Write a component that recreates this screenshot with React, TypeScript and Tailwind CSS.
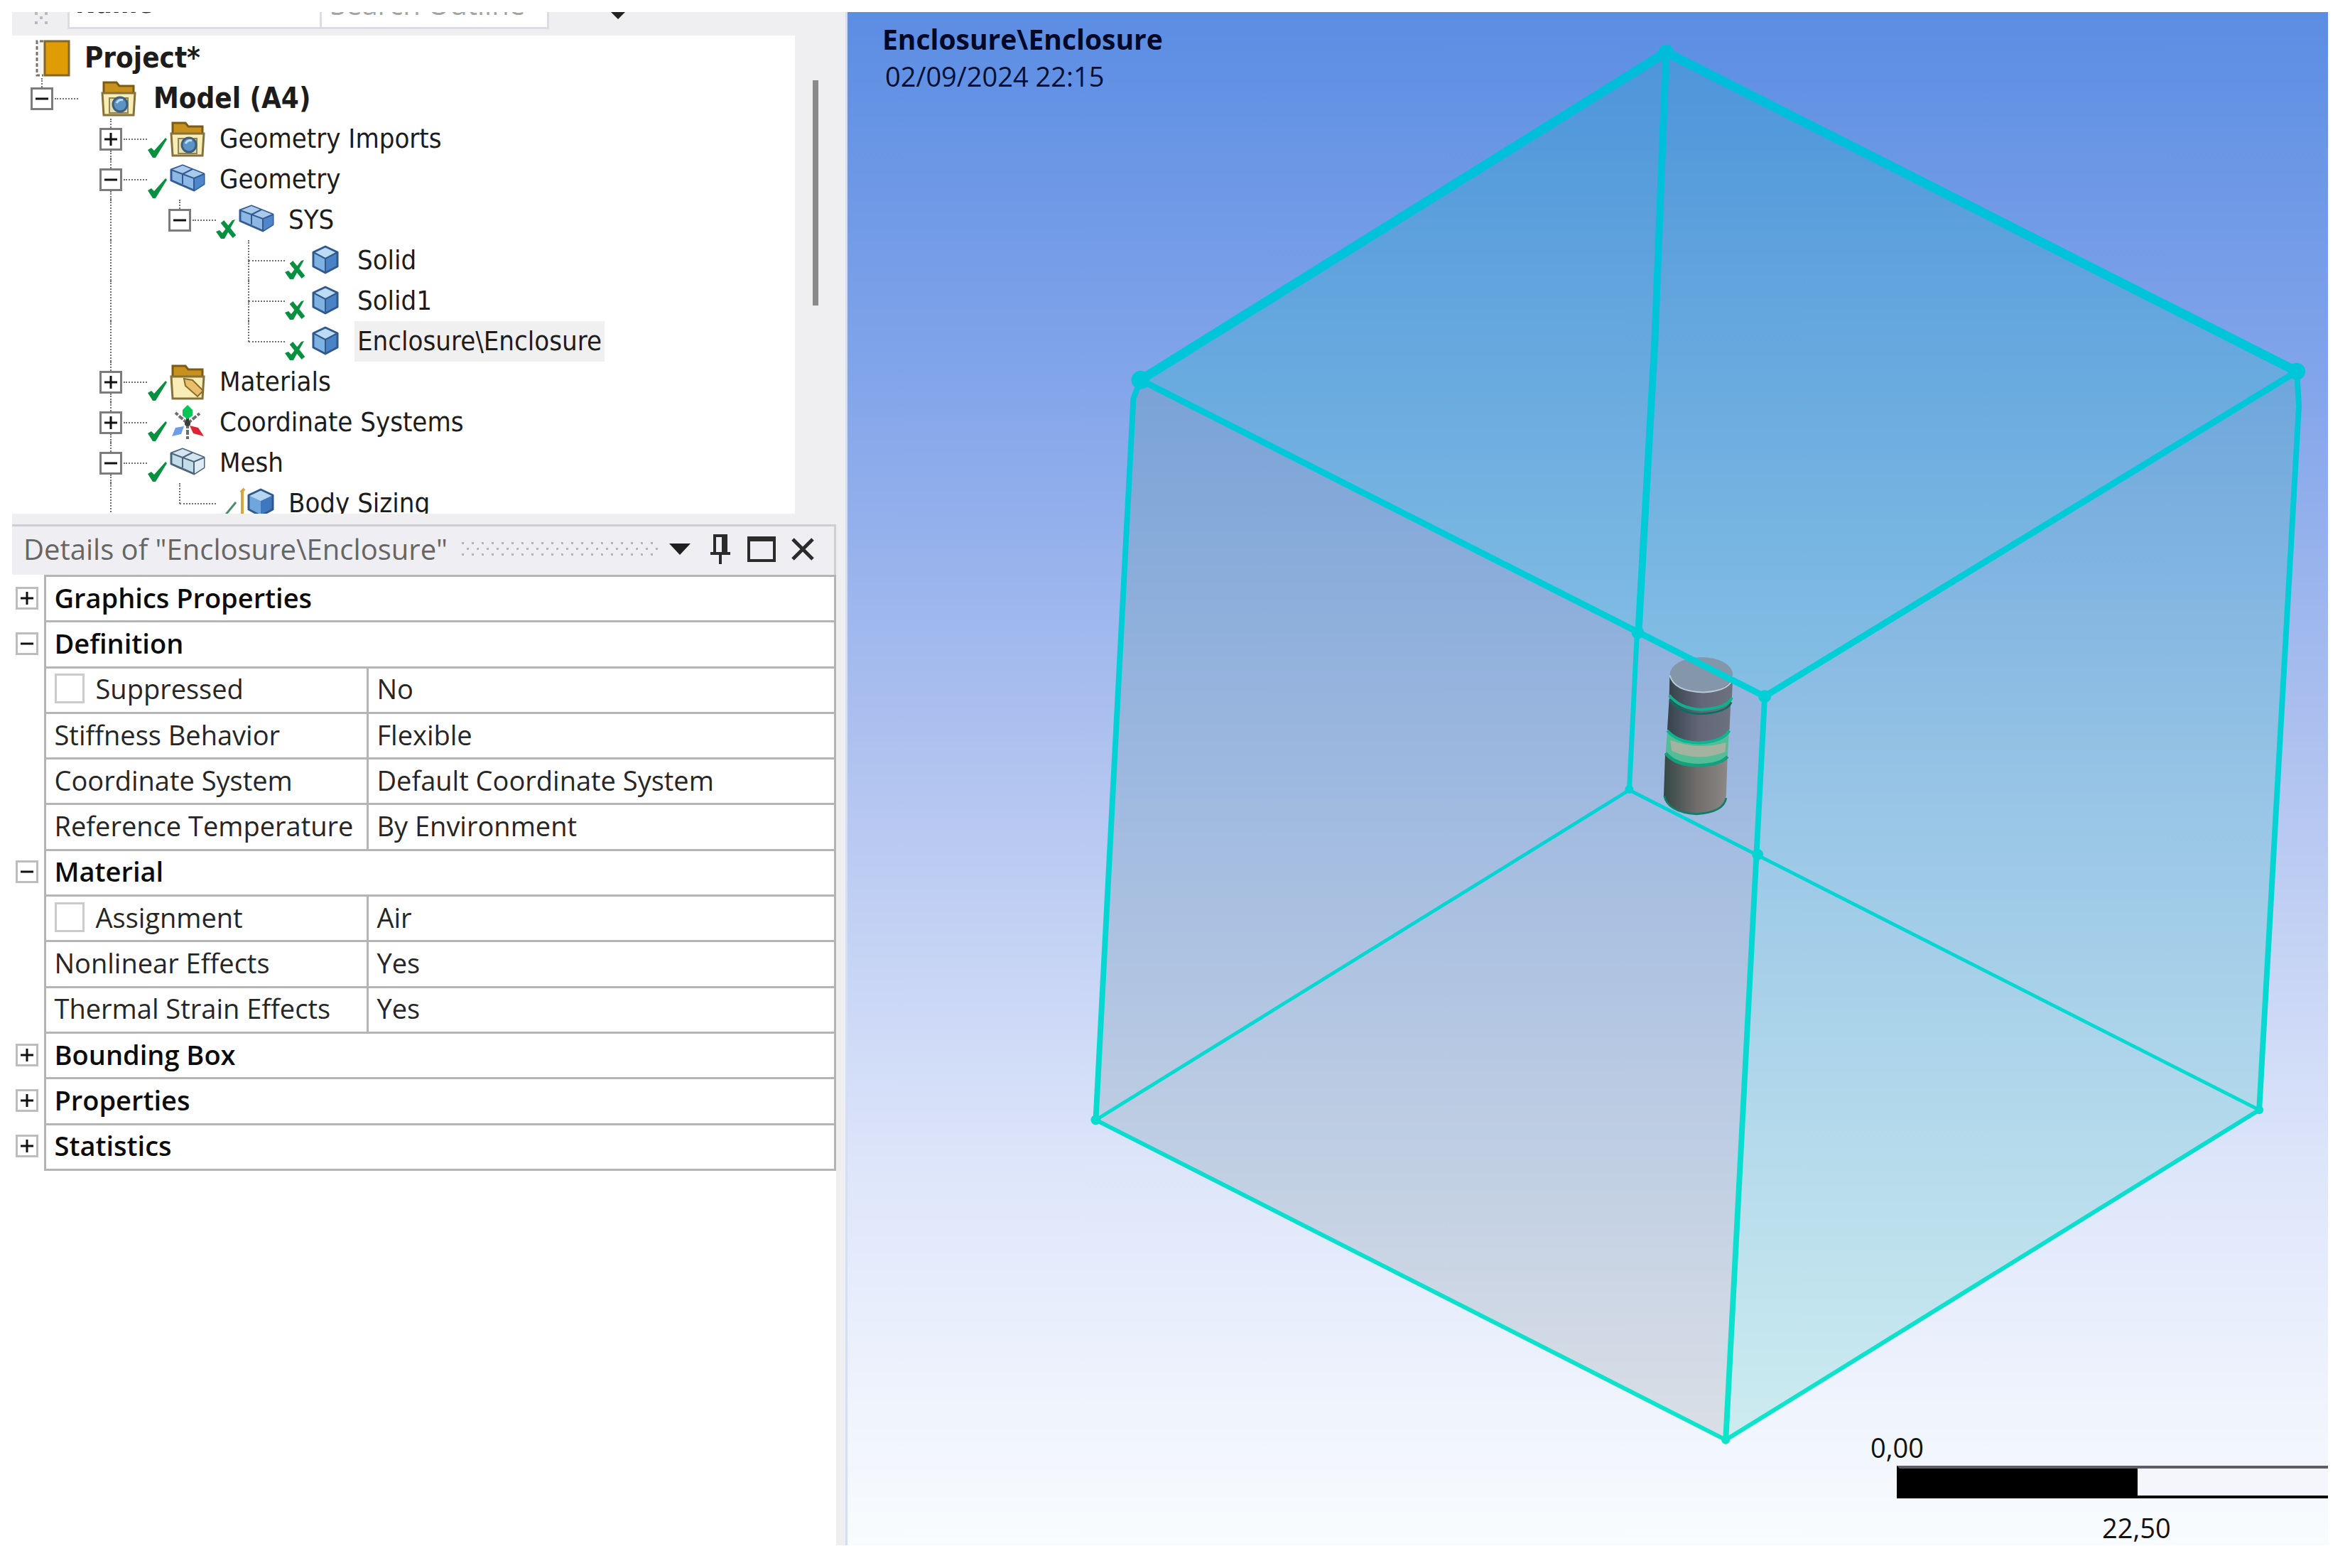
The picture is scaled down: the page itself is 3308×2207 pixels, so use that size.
import type { ReactNode } from 'react'

type TreeRow = {
  label: string
  icon: ReactNode
  guides: boolean[]
  box?: 'plus' | 'minus'
  mark?: 'check' | 'hidden' | 'thin'
  last?: boolean
  bold?: boolean
  selected?: boolean
}

type DetailRow = {
  name: string
  value?: string
  box?: 'plus' | 'minus'
  checkbox?: boolean
}

function FolderIcon({ content }: { content: 'ball' | 'tag' }) {
  return (
    <svg viewBox="0 0 50 50" className="size-[50px]">
      <path d="M4 20V2h18l4 5h20v13z" fill="#c8901c" stroke="#7d5a12" strokeWidth="3" />
      <path d="M2 17h46l-2 31H4z" fill="#f8edb4" stroke="#85713a" strokeWidth="3" />
      {content === 'ball' ? (
        <>
          <path d="M12 24h26v21H12z" fill="#e8dfae" stroke="#8f8458" strokeWidth="2" />
          <circle cx="27" cy="33" r="10" fill="#5b93c4" stroke="#3f5f7d" strokeWidth="3" />
          <path d="M22 31q4-6 9-4" fill="none" stroke="#b9dcf2" strokeWidth="3" />
        </>
      ) : (
        <path d="M20 20l12 2 15 15-8 8-17-15z" fill="#e9bf6c" stroke="#8b6a2a" strokeWidth="2" />
      )}
    </svg>
  )
}

function BodyIcon() {
  return (
    <svg viewBox="0 0 50 50" className="size-[50px]">
      <path d="M25 5l17 8-17 9-17-9z" fill="#bcdcf5" />
      <path d="M8 13l17 9v19L8 33z" fill="#7fb2e2" />
      <path d="M42 13l-17 9v19l17-8z" fill="#4a82c6" />
      <path d="M25 5l17 8v20l-17 9-17-9V13z" fill="none" stroke="#31588a" strokeWidth="3" strokeLinejoin="round" />
      <path d="M8 13l17 9 17-9M25 22v19" fill="none" stroke="#31588a" strokeWidth="2" />
    </svg>
  )
}

function BodiesIcon({ pale }: { pale?: boolean }) {
  const side = pale ? '#c3dcec' : '#8db8e6'
  const front = pale ? '#dcebf5' : '#4d86ca'
  const line = pale ? '#4c6578' : '#345b91'
  return (
    <svg viewBox="0 0 50 50" className="size-[50px]">
      <path d="M2 11l16-6 30 12v14l-14 9L2 26z" fill={side} stroke={line} strokeWidth="3" strokeLinejoin="round" />
      <path d="M18 5l30 12-13 6L3 11z" fill={pale ? '#d3e5f0' : '#a9caec'} />
      <path d="M35 23l13-6v14l-14 9z" fill={front} />
      <path d="M2 11l32 12 14-6M34 23v17M18 17v14M18 17l14-7" fill="none" stroke={line} strokeWidth="2" />
    </svg>
  )
}

function AxesIcon() {
  return (
    <svg viewBox="0 0 50 50" className="size-[50px]">
      <path d="M25 26L8 11M25 26l17-14M25 26v22" stroke="#6d6d6d" strokeWidth="4" strokeDasharray="7 2" />
      <path d="M25 26v-8" stroke="#333" strokeWidth="4" />
      <circle cx="25" cy="26" r="4" fill="#3c3c3c" />
      <path d="M25 0l7 7v8l-7 5-7-5V7z" fill="#06c755" />
      <path d="M28 29l12 3 8 12-15-4z" fill="#dd2437" />
      <path d="M20 30L8 32 3 44l13-3z" fill="#6b9ee6" />
    </svg>
  )
}

function SizingIcon() {
  return (
    <svg viewBox="0 0 50 50" className="size-[50px]">
      <path d="M8 4L3 9M5 7v34l7 2" fill="none" stroke="#d8a63a" strokeWidth="4" />
      <path d="M31 5l17 8-17 8-17-8z" fill="#b5d6f2" />
      <path d="M14 13l17 8v20l-17-8z" fill="#6fa6dd" />
      <path d="M48 13l-17 8v20l17-8z" fill="#3f78bf" />
      <path d="M31 5l17 8v20l-17 9-17-9V13z" fill="none" stroke="#31588a" strokeWidth="3" strokeLinejoin="round" />
    </svg>
  )
}

function ProjectIcon() {
  return (
    <svg viewBox="0 0 50 52" className="h-[52px] w-[50px]">
      <rect x="2" y="2" width="14" height="48" fill="#f7f7f2" />
      <path d="M12 2H3v48h9" fill="none" stroke="#77746c" strokeWidth="3" strokeDasharray="5 3" />
      <rect x="14" y="2" width="34" height="48" fill="#e09c05" stroke="#86672a" strokeWidth="3" />
    </svg>
  )
}

function StateMark({ kind }: { kind?: TreeRow['mark'] }) {
  return (
    <svg viewBox="0 0 32 57" className="h-[57px] w-8 shrink-0">
      {kind === 'check' && (
        <path d="M1 44l5-3 4 4L26 27l2 2L12 55H8z" fill="#06903f" />
      )}
      {kind === 'hidden' && (
        <>
          <path d="M0 45l5-2 4 4L23 29l4-1-15 27H7z" fill="#06903f" />
          <path d="M9 31l17 21" stroke="#06903f" strokeWidth="6" />
        </>
      )}
      {kind === 'thin' && <path d="M14 44l14-17" stroke="#4e8d66" strokeWidth="3" />}
    </svg>
  )
}

function ExpandBox({ kind, label, light }: { kind: 'plus' | 'minus'; label: string; light?: boolean }) {
  return (
    <button
      type="button"
      aria-label={(kind === 'plus' ? 'Expand ' : 'Collapse ') + label}
      className={
        light
          ? 'block size-8 shrink-0 border-3 border-[#bdbdbd] bg-white'
          : 'block size-8 shrink-0 border-3 border-[#7c7c7c] bg-white'
      }
    >
      <svg viewBox="0 0 26 26" className="size-full">
        <path d={kind === 'plus' ? 'M4 13h18M13 4v18' : 'M4 13h18'} stroke="#111" strokeWidth="3" />
      </svg>
    </button>
  )
}

const treeRows: TreeRow[] = [
  { label: 'Model (A4)', icon: <FolderIcon content="ball" />, guides: [], box: 'minus', last: true, bold: true },
  { label: 'Geometry Imports', icon: <FolderIcon content="ball" />, guides: [false], box: 'plus', mark: 'check' },
  { label: 'Geometry', icon: <BodiesIcon />, guides: [false], box: 'minus', mark: 'check' },
  { label: 'SYS', icon: <BodiesIcon />, guides: [false, true], box: 'minus', mark: 'hidden', last: true },
  { label: 'Solid', icon: <BodyIcon />, guides: [false, true, false], mark: 'hidden' },
  { label: 'Solid1', icon: <BodyIcon />, guides: [false, true, false], mark: 'hidden' },
  { label: 'Enclosure\\Enclosure', icon: <BodyIcon />, guides: [false, true, false], mark: 'hidden', last: true, selected: true },
  { label: 'Materials', icon: <FolderIcon content="tag" />, guides: [false], box: 'plus', mark: 'check' },
  { label: 'Coordinate Systems', icon: <AxesIcon />, guides: [false], box: 'plus', mark: 'check' },
  { label: 'Mesh', icon: <BodiesIcon pale />, guides: [false], box: 'minus', mark: 'check' },
  { label: 'Body Sizing', icon: <SizingIcon />, guides: [false, true], mark: 'thin', last: true },
]

const detailRows: DetailRow[] = [
  { name: 'Graphics Properties', box: 'plus' },
  { name: 'Definition', box: 'minus' },
  { name: 'Suppressed', value: 'No', checkbox: true },
  { name: 'Stiffness Behavior', value: 'Flexible' },
  { name: 'Coordinate System', value: 'Default Coordinate System' },
  { name: 'Reference Temperature', value: 'By Environment' },
  { name: 'Material', box: 'minus' },
  { name: 'Assignment', value: 'Air', checkbox: true },
  { name: 'Nonlinear Effects', value: 'Yes' },
  { name: 'Thermal Strain Effects', value: 'Yes' },
  { name: 'Bounding Box', box: 'plus' },
  { name: 'Properties', box: 'plus' },
  { name: 'Statistics', box: 'plus' },
]

function OutlineToolbar() {
  return (
    <div className="flex h-[33px] shrink-0 items-end overflow-hidden pb-[9px]">
      <svg viewBox="0 0 78 24" className="h-6 w-[78px] shrink-0" fill="#b9b9c4">
        <path d="M32 0h4v4h-4zM46 0h4v4h-4zM39 6h4v4h-4zM32 13h4v4h-4zM46 13h4v4h-4z" />
      </svg>
      <select
        aria-label="Filter by"
        className="h-[72px] w-[358px] shrink-0 appearance-none border-3 border-[#dcdce4] bg-white px-2 font-['DejaVu_Sans_Condensed','DejaVu_Sans',sans-serif] text-[38px] font-bold text-[#222]"
      >
        <option>Name</option>
      </select>
      <input
        type="text"
        aria-label="Search Outline"
        placeholder="Search Outline"
        className="h-[72px] w-[320px] shrink-0 border-3 border-l-0 border-[#dcdce4] bg-white px-3 text-[40px] placeholder:text-[#a3a3a3]"
      />
      <button type="button" aria-label="More" className="ml-[82px] flex h-6 w-[30px] items-start justify-center">
        <svg viewBox="0 0 20 10" className="h-[10px] w-5">
          <path d="M0 0h20L10 10z" fill="#222" />
        </svg>
      </button>
    </div>
  )
}

function TreeItem({ row }: { row: TreeRow }) {
  return (
    <li className="flex h-[57px] items-center">
      {row.guides.map((on, i) => (
        <span key={i} className="flex h-full w-[97px] shrink-0 pl-[15px]">
          {on && <span className="border-l-2 border-dotted border-[#6f6f6f]" />}
        </span>
      ))}
      <span className="flex h-full w-8 shrink-0 flex-col items-center">
        <span className="w-0 flex-1 border-l-2 border-dotted border-[#6f6f6f]" />
        {row.box && <ExpandBox kind={row.box} label={row.label} />}
        <span className={row.last ? 'w-0 flex-1' : 'w-0 flex-1 border-l-2 border-dotted border-[#6f6f6f]'} />
      </span>
      <span
        className={
          row.box
            ? 'ml-0.5 w-[33px] shrink-0 border-t-2 border-dotted border-[#6f6f6f]'
            : '-ml-4 w-[51px] shrink-0 border-t-2 border-dotted border-[#6f6f6f]'
        }
      />
      <StateMark kind={row.mark} />
      {row.icon}
      <span
        className={
          row.bold
            ? 'ml-5 px-1 text-[40px] leading-[57px] font-bold'
            : row.selected
              ? 'ml-4 bg-[#f0f0f0] px-1 leading-[57px]'
              : 'ml-4 px-1 leading-[57px]'
        }
      >
        {row.label}
      </span>
    </li>
  )
}

function OutlineTree() {
  return (
    <div className="flex h-[673px] shrink-0">
      <ul className="flex-1 overflow-hidden bg-white pt-[3px] pl-[26px] font-['DejaVu_Sans_Condensed','DejaVu_Sans',sans-serif] text-[38px] whitespace-nowrap text-[#1c1c1c]">
        <li className="flex h-[57px] items-center gap-5 pl-1.5">
          <ProjectIcon />
          <span className="text-[40px] leading-[57px] font-bold">Project*</span>
        </li>
        {treeRows.map((row) => (
          <TreeItem key={row.label} row={row} />
        ))}
      </ul>
      <div className="w-[71px] shrink-0 pt-[63px] pl-[25px]">
        <div className="h-[317px] w-2 bg-[#8a8a8a]" />
      </div>
    </div>
  )
}

function DetailsHeader() {
  return (
    <div className="flex h-[71px] items-center border-t-3 border-r-3 border-[#cfcfd3] bg-[#efeff3] pr-[28px] pb-1 pl-4">
      <h2 className="text-[40px] whitespace-nowrap text-[#666]">Details of "Enclosure\Enclosure"</h2>
      <svg className="ml-5 h-5 min-w-0 flex-1">
        <defs>
          <pattern id="grip" width="14" height="16" patternUnits="userSpaceOnUse">
            <rect width="3" height="3" fill="#b3b3b8" />
            <rect x="7" y="8" width="3" height="3" fill="#b3b3b8" />
          </pattern>
        </defs>
        <rect width="100%" height="20" fill="url(#grip)" />
      </svg>
      <button type="button" aria-label="Menu" className="ml-3">
        <svg viewBox="0 0 30 16" className="h-4 w-[30px]">
          <path d="M0 0h30L15 16z" fill="#1f1f1f" />
        </svg>
      </button>
      <button type="button" aria-label="Pin" className="ml-7">
        <svg viewBox="0 0 28 42" className="h-[42px] w-7" fill="none" stroke="#2b2b2b" strokeWidth="4">
          <path d="M6 26V2h16v24M0 27h28M14 28v14M18 2v24" />
        </svg>
      </button>
      <button type="button" aria-label="Maximize" className="ml-6">
        <svg viewBox="0 0 40 36" className="h-9 w-10" fill="none" stroke="#2b2b2b">
          <rect x="2" y="2" width="36" height="32" strokeWidth="4" />
          <path d="M0 4h40" strokeWidth="6" />
        </svg>
      </button>
      <button type="button" aria-label="Close" className="ml-[22px]">
        <svg viewBox="0 0 32 32" className="size-8" stroke="#2b2b2b" strokeWidth="5">
          <path d="M2 2l28 28M30 2L2 30" />
        </svg>
      </button>
    </div>
  )
}

function DetailsTable() {
  return (
    <table className="h-[839px] w-full table-fixed border-collapse text-[38px] leading-[52px] text-[#262626]">
      <colgroup>
        <col className="w-[46px]" />
        <col className="w-[454px]" />
        <col />
      </colgroup>
      <tbody>
        {detailRows.map((row) => (
          <tr key={row.name}>
            <td className="p-0 pb-0.5 pl-[5px]">{row.box && <ExpandBox kind={row.box} label={row.name} light />}</td>
            {row.value === undefined ? (
              <th colSpan={2} scope="colgroup" className="border-3 border-[#b4b4b4] p-0 pb-1 pl-3 text-left font-semibold text-[#0c0c0c]">
                {row.name}
              </th>
            ) : (
              <>
                <td className="border-3 border-[#b4b4b4] p-0 pb-1 pl-3 whitespace-nowrap">
                  {row.checkbox ? (
                    <label className="flex items-center gap-4">
                      <input type="checkbox" className="size-[42px] appearance-none border-3 border-[#cbcbcb] bg-white" />
                      {row.name}
                    </label>
                  ) : (
                    row.name
                  )}
                </td>
                <td className="border-3 border-[#b4b4b4] p-0 pb-1 pl-3">{row.value}</td>
              </>
            )}
          </tr>
        ))}
      </tbody>
    </table>
  )
}

function EnclosureModel() {
  return (
    <svg viewBox="1190 17 2087 2158" className="absolute inset-0 size-full">
      <defs>
        <linearGradient id="top" gradientUnits="userSpaceOnUse" x1="0" y1="72" x2="0" y2="980">
          <stop offset="0" stopColor="#4d95da" />
          <stop offset="1" stopColor="#85bfe4" />
        </linearGradient>
        <linearGradient id="left" gradientUnits="userSpaceOnUse" x1="0" y1="534" x2="0" y2="2028">
          <stop offset="0" stopColor="#79a2d6" />
          <stop offset="0.4" stopColor="#a0bae0" />
          <stop offset="1" stopColor="#dadfe6" />
        </linearGradient>
        <linearGradient id="right" gradientUnits="userSpaceOnUse" x1="0" y1="522" x2="0" y2="2028">
          <stop offset="0" stopColor="#6da6dc" />
          <stop offset="0.4" stopColor="#98c5e6" />
          <stop offset="1" stopColor="#cdecf0" />
        </linearGradient>
        <linearGradient id="edge" gradientUnits="userSpaceOnUse" x1="0" y1="72" x2="0" y2="2028">
          <stop offset="0" stopColor="#00bcdc" />
          <stop offset="0.45" stopColor="#02cfd6" />
          <stop offset="1" stopColor="#0fe4cb" />
        </linearGradient>
        <linearGradient id="steel">
          <stop offset="0" stopColor="#36434b" />
          <stop offset="0.5" stopColor="#626678" />
          <stop offset="1" stopColor="#6c727e" />
        </linearGradient>
        <linearGradient id="base">
          <stop offset="0" stopColor="#344745" />
          <stop offset="0.5" stopColor="#6e6b69" />
          <stop offset="1" stopColor="#8d8886" />
        </linearGradient>
      </defs>

      <path d="M2344 72L3233 522 2483 980 1603 534z" fill="url(#top)" />
      <path d="M1603 534L2483 980 2428 2028 1540 1577 1593 560z" fill="url(#left)" />
      <path d="M3233 522L2483 980 2428 2028 3180 1563 3236 570z" fill="url(#right)" />

      {/* edges seen through the enclosure */}
      <g fill="none" stroke="url(#edge)" strokeLinecap="round">
        <path d="M2344 72L2328 480 2305 890" strokeWidth="10" />
        <path d="M2303 890L2292 1112" strokeWidth="7" />
        <path d="M2292 1112L1540 1577M2292 1112L3180 1563" strokeWidth="5" />
      </g>

      {/* magnet stack */}
      <g transform="translate(2200 860) scale(.3333)">
        <path d="M428 600L422 780Q430 850 560 858 680 850 686 780L692 600z" fill="url(#base)" />
        <path d="M424 780Q440 850 560 858 676 850 686 790" fill="none" stroke="#0f7d68" strokeWidth="8" />
        <path d="M437 510L430 600Q470 655 570 655 660 650 692 615L698 510z" fill="#53bd98" />
        <path d="M450 545Q570 590 685 555L682 595Q570 640 455 590z" fill="#a3b3a0" />
        <path d="M430 600Q470 652 570 652 660 650 692 615" fill="none" stroke="#14a07c" strokeWidth="14" />
        <path d="M445 370L437 500Q480 550 570 552 670 548 700 500L706 370z" fill="url(#steel)" />
        <path d="M437 505Q480 555 570 557 670 553 700 505" fill="none" stroke="#0cb591" strokeWidth="12" />
        <path d="M447 280L445 365Q490 425 580 427 690 420 710 370L714 280z" fill="url(#steel)" />
        <path d="M445 355Q490 412 580 416 690 410 710 365" fill="none" stroke="#10b08f" strokeWidth="12" />
        <path d="M447 375Q490 432 580 434 690 428 708 385" fill="none" stroke="#0a6e62" strokeWidth="8" />
        <ellipse cx="581" cy="268" rx="133" ry="74" fill="#8497aa" />
        <path d="M448 272Q465 340 590 343 710 336 714 275" fill="none" stroke="#b9c8d6" strokeWidth="6" />
      </g>

      <g fill="none" stroke="url(#edge)" strokeLinecap="round" strokeLinejoin="round">
        <path d="M1603 534L2344 72 3233 522" strokeWidth="13" />
        <path d="M1603 534L2483 980 3233 522" strokeWidth="9" />
        <path d="M1603 534L1593 560 1540 1577M3233 522L3236 570 3180 1563M2483 980L2428 2028" strokeWidth="8" />
        <path d="M1540 1577L2428 2028 3180 1563" strokeWidth="6" />
      </g>
      <g fill="url(#edge)">
        <circle cx="2344" cy="72" r="11" />
        <circle cx="1603" cy="534" r="13" />
        <circle cx="3233" cy="522" r="12" />
        <circle cx="2483" cy="980" r="9" />
        <circle cx="2304" cy="890" r="9" />
        <circle cx="2473" cy="1203" r="8" />
        <circle cx="2292" cy="1111" r="6" />
        <circle cx="1540" cy="1577" r="7" />
        <circle cx="3180" cy="1563" r="6" />
        <circle cx="2428" cy="2028" r="6" />
      </g>
    </svg>
  )
}

function Viewport() {
  return (
    <main className="relative flex min-w-0 flex-1 flex-col justify-between overflow-hidden border-l-3 border-[#d3def4] bg-[linear-gradient(to_bottom,#5b8de3_0%,#84a6ea_25%,#b2c4f0_50%,#dde5fa_75%,#f9fcfe_100%)]">
      <EnclosureModel />
      <div className="relative pt-3 pl-[49px] leading-[52px]">
        <h1 className="text-[39px] font-bold text-[#020825]">Enclosure\Enclosure</h1>
        <p className="pl-1 text-[38px] text-[#041033]">02/09/2024 22:15</p>
      </div>
      <div className="relative w-[648px] self-end text-[38px] leading-[52px] text-[#111]">
        <p className="pl-1">0,00</p>
        <div className="ml-[41px] flex h-[46px] border-y-4 border-l-4 border-black border-t-[#5c5e63] bg-[#f4f6fb]">
          <div className="w-[335px] bg-black" />
        </div>
        <p className="pt-4 pl-[330px] leading-[50px]">22,50</p>
      </div>
    </main>
  )
}

export default function App() {
  return (
    <div className="flex h-screen bg-white pt-[17px] pr-[31px] pb-8 pl-[17px] font-['Open_Sans','Noto_Sans',sans-serif]">
      <aside className="flex w-[1173px] shrink-0 flex-col bg-[#efeff2]">
        <OutlineToolbar />
        <OutlineTree />
        <section className="mt-[15px] mr-[13px] flex-1 bg-white">
          <DetailsHeader />
          <DetailsTable />
        </section>
      </aside>
      <Viewport />
    </div>
  )
}
